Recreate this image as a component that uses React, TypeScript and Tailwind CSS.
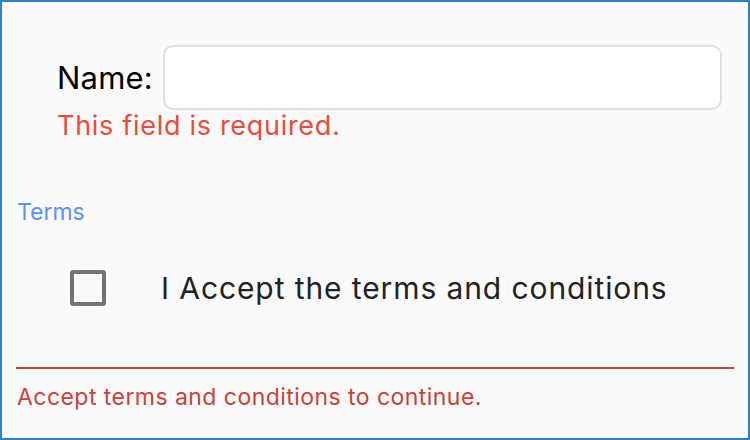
export default function App() {
  return (
    <div
      className="w-[750px] h-[440px] border-2 border-[#2b80cf] bg-[#fafafa] flex flex-col"
      style={{ fontFamily: 'Inter, "Noto Sans", sans-serif' }}
    >
      <div className="pl-[55px] pr-[26px] pt-[43px] flex items-center gap-[10px]">
        <label className="text-[31px] leading-none text-black tracking-[0.2px]">Name:</label>
        <input
          type="text"
          className="flex-1 h-[65px] bg-white border-2 border-[#e0e0e0] rounded-[10px] outline-none px-3 text-[24px]"
        />
      </div>
      <p className="pl-[55px] mt-[1px] text-[27px] leading-[30px] tracking-[0.7px] text-[#ea4b3c]">
        This field is required.
      </p>

      <p className="pl-[15px] mt-[58px] text-[23px] leading-[26px] text-[#5b93f0]">Terms</p>

      <div className="flex items-center mt-[45px] pl-[68px]">
        <span className="w-[36px] h-[36px] border-4 border-[#737373] rounded-[3px] bg-transparent" />
        <span className="ml-[55px] text-[30px] leading-none tracking-[0.9px] text-[#222222]">
          I Accept the terms and conditions
        </span>
      </div>

      <div className="mx-[14px] mt-[61px] h-[2px] bg-[#c8423a]" />
      <p className="pl-[15px] mt-[15px] text-[23px] leading-[26px] tracking-[0.45px] text-[#c8423a]">
        Accept terms and conditions to continue.
      </p>
    </div>
  );
}
